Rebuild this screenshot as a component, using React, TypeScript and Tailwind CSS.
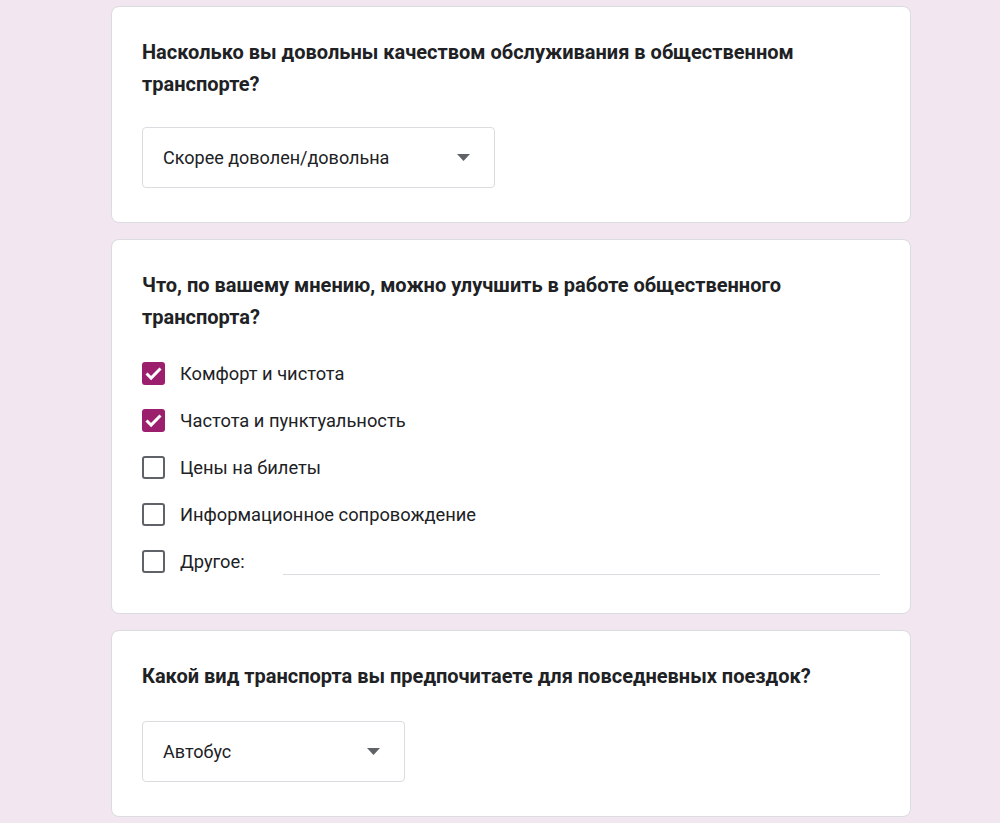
import { useState } from 'react';

type Option = {
  label: string;
  checked: boolean;
};

const improvementOptions: Option[] = [
  { label: 'Комфорт и чистота', checked: true },
  { label: 'Частота и пунктуальность', checked: true },
  { label: 'Цены на билеты', checked: false },
  { label: 'Информационное сопровождение', checked: false },
];

function QuestionCard({
  title,
  children,
  className = 'pb-[34px]',
}: {
  title: string;
  children: React.ReactNode;
  className?: string;
}) {
  return (
    <section className={`rounded-[8px] border border-[#dadce0] bg-white px-[30px] pt-[29px] ${className}`}>
      <h2 className="max-w-[680px] text-[20px] font-bold leading-[32px] text-[#202124]">{title}</h2>
      {children}
    </section>
  );
}

function Dropdown({ value, className }: { value: string; className: string }) {
  return (
    <button
      className={`flex h-[61px] items-center justify-between rounded-[4px] border border-[#dadce0] bg-white pl-[20px] pr-[24px] text-left text-[18px] text-[#202124] ${className}`}
      type="button"
    >
      <span>{value}</span>
      <svg aria-hidden="true" className="h-[7px] w-[13px]" viewBox="0 0 13 7">
        <path d="M0 0h13L6.5 7z" fill="#5f6368" />
      </svg>
    </button>
  );
}

function Checkbox({ checked, onToggle }: { checked: boolean; onToggle: () => void }) {
  return (
    <button
      aria-checked={checked}
      className={
        checked
          ? 'flex h-[23px] w-[23px] shrink-0 items-center justify-center rounded-[3px] bg-[#9c1f6e]'
          : 'h-[23px] w-[23px] shrink-0 rounded-[3px] border-2 border-[#5f6368] bg-white'
      }
      role="checkbox"
      type="button"
      onClick={onToggle}
    >
      {checked ? (
        <svg aria-hidden="true" className="h-[23px] w-[23px]" viewBox="0 0 23 23">
          <path d="M4.5 11.5l4.6 4.6L18.5 6.5" fill="none" stroke="#fff" strokeWidth="3" />
        </svg>
      ) : null}
    </button>
  );
}

export default function App() {
  const [options, setOptions] = useState(improvementOptions);
  const [otherChecked, setOtherChecked] = useState(false);

  return (
    <div
      className="min-h-[823px] bg-[#f2e6f0] pt-[6px]"
      style={{ fontFamily: 'Roboto, "Noto Sans", Arial, sans-serif' }}
    >
      <div className="ml-[111px] flex w-[800px] flex-col gap-[16px]">
        <QuestionCard title="Насколько вы довольны качеством обслуживания в общественном транспорте?">
          <Dropdown className="mt-[27px] w-[353px]" value="Скорее доволен/довольна" />
        </QuestionCard>

        <QuestionCard
          className="pb-[28px]"
          title="Что, по вашему мнению, можно улучшить в работе общественного транспорта?"
        >
          <ul className="mt-[17px]">
            {options.map((option, index) => (
              <li className="flex h-[47px] items-center gap-[15px]" key={option.label}>
                <Checkbox
                  checked={option.checked}
                  onToggle={() =>
                    setOptions((current) =>
                      current.map((item, i) => (i === index ? { ...item, checked: !item.checked } : item)),
                    )
                  }
                />
                <span className="text-[18.3px] text-[#202124]">{option.label}</span>
              </li>
            ))}
            <li className="flex h-[47px] items-center gap-[15px]">
              <Checkbox checked={otherChecked} onToggle={() => setOtherChecked((v) => !v)} />
              <span className="w-[88px] text-[18.3px] text-[#202124]">Другое:</span>
              <span className="mt-[26px] h-px flex-1 bg-[#dadce0]" />
            </li>
          </ul>
        </QuestionCard>

        <QuestionCard title="Какой вид транспорта вы предпочитаете для повседневных поездок?">
          <Dropdown className="mt-[29px] w-[263px]" value="Автобус" />
        </QuestionCard>
      </div>
    </div>
  );
}
